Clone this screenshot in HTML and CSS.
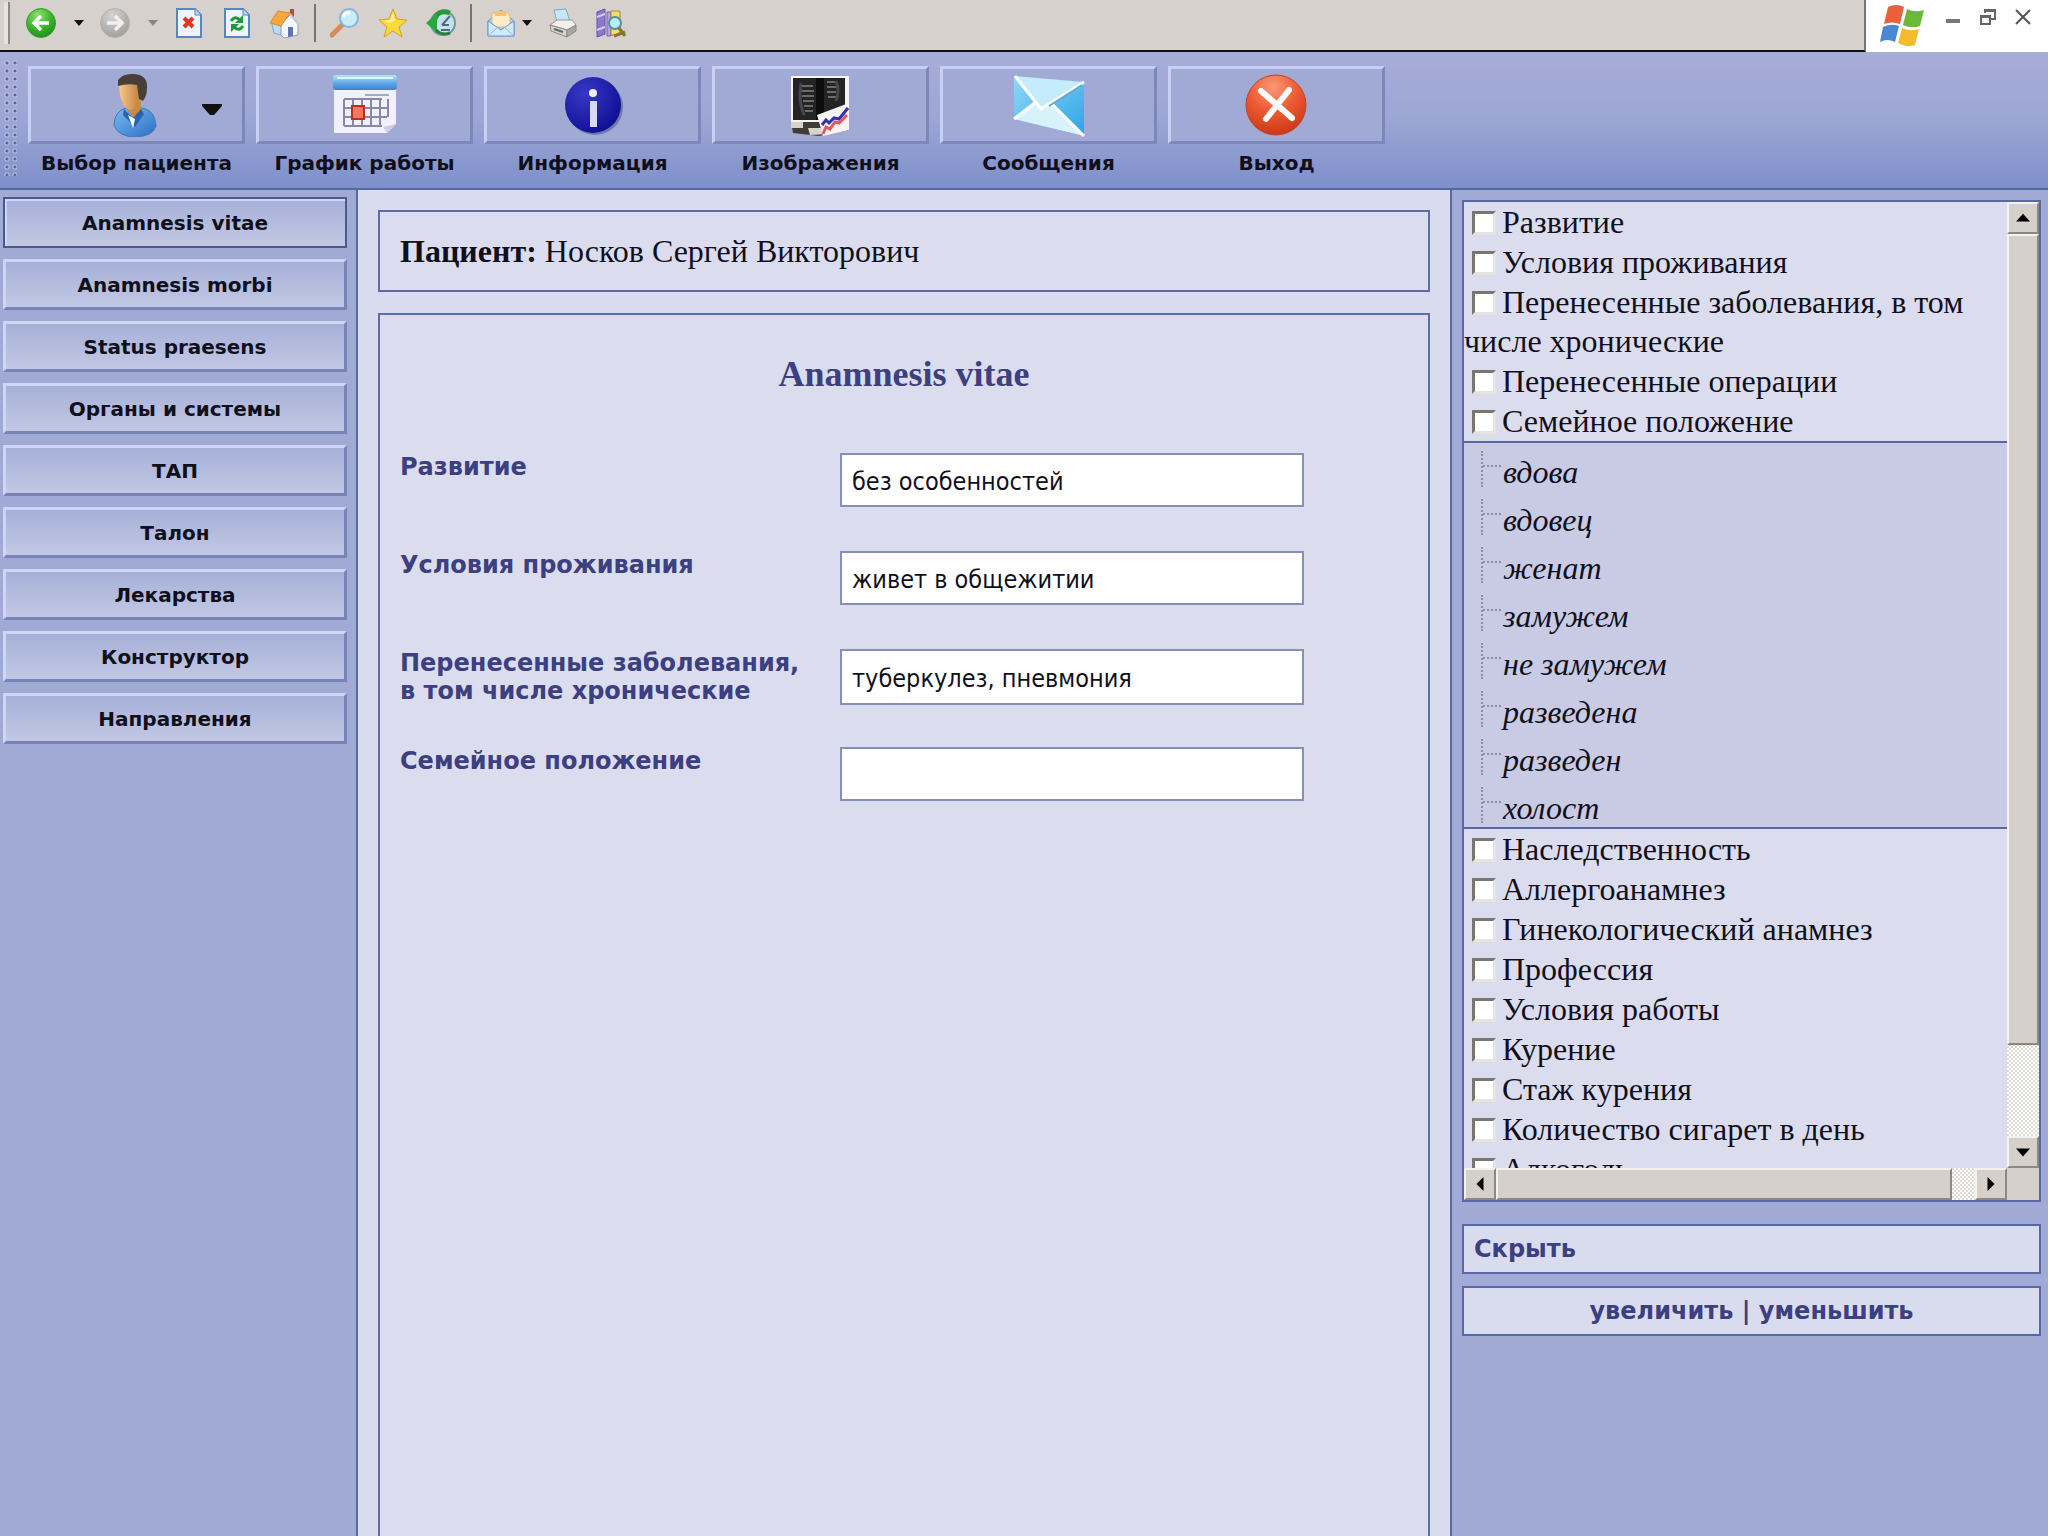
FILE: index.html
```html
<!DOCTYPE html>
<html lang="ru">
<head>
    <meta charset="UTF-8">
    <meta name="viewport" content="width=device-width, initial-scale=1.0">
    <title>Anamnesis vitae</title>
    <link rel="stylesheet" href="styles.css">
</head>
<body>
    <div class="browser-bar">
        <div class="browser-tools">
            <span class="bar-handle"></span>
            <button class="tool" aria-label="Назад">
                <svg viewBox="0 0 30 30"><defs><radialGradient id="gBack" cx=".4" cy=".25" r=".8"><stop offset="0" stop-color="#8fe070"/><stop offset=".55" stop-color="#3cb62c"/><stop offset="1" stop-color="#1c8a18"/></radialGradient></defs><circle cx="15" cy="15" r="14.500" fill="url(#gBack)" stroke="#3a9a30"/><path d="M15 8l-7 7 7 7M9 15h14" fill="none" stroke="#fff" stroke-width="3.500"/></svg>
            </button>
            <button class="tool-arrow" aria-label="История назад"><svg viewBox="0 0 10 6"><path d="M0 0h10l-5 6z" fill="#111"/></svg></button>
            <button class="tool" aria-label="Вперед">
                <svg viewBox="0 0 30 30"><defs><radialGradient id="gFwd" cx=".4" cy=".25" r=".8"><stop offset="0" stop-color="#d6d4d2"/><stop offset="1" stop-color="#9e9c9a"/></radialGradient></defs><circle cx="15" cy="15" r="14.500" fill="url(#gFwd)" stroke="#b4b0ae"/><path d="M15 8l7 7-7 7M21 15H7" fill="none" stroke="#f2f0ee" stroke-width="3.500"/></svg>
            </button>
            <button class="tool-arrow" aria-label="История вперед"><svg viewBox="0 0 10 6"><path d="M0 0h10l-5 6z" fill="#8c8984"/></svg></button>
            <button class="tool" aria-label="Остановить">
                <svg viewBox="0 0 30 30"><path d="M3 1h18l6 6v22H3z" fill="#eef5fd" stroke="#5a86be" stroke-width="2"/><path d="M21 1v6h6" fill="#b8d2f0" stroke="#5a86be"/><path d="M10 10l9 9M19 10l-9 9" stroke="#e03820" stroke-width="4"/></svg>
            </button>
            <button class="tool" aria-label="Обновить">
                <svg viewBox="0 0 30 30"><path d="M3 1h18l6 6v22H3z" fill="#eef5fd" stroke="#5a86be" stroke-width="2"/><path d="M21 1v6h6" fill="#b8d2f0" stroke="#5a86be"/><path d="M9 13q4-6 9-1M21 18q-4 6-9 1" fill="none" stroke="#1f9a34" stroke-width="3"/><path d="M21 7v8h-8zM9 24v-8h8z" fill="#1f9a34"/></svg>
            </button>
            <button class="tool" aria-label="Домой">
                <svg viewBox="0 0 30 30"><path d="M20 1h4v8h-4z" fill="#b0503c"/><path d="M2 16l8-10 8 10v13L4 25z" fill="#bcdcf4" stroke="#7ea8d0"/><path d="M11 16l9-9 8 9v11l-14 3-3-3z" fill="#f4f7ff" stroke="#8c9cc4"/><path d="M0 15L8 3l12 2-9 13z" fill="#f6a83c" stroke="#d88a28"/><path d="M20 6l9 11" stroke="#c0c8dc" stroke-width="2"/><path d="M18 19h5v9l-5 1z" fill="#6272b4"/></svg>
            </button>
            <span class="bar-sep"></span>
            <button class="tool" aria-label="Поиск">
                <svg viewBox="0 0 30 30"><path d="M12 17L2 27" stroke="#d88a58" stroke-width="5" stroke-linecap="round"/><circle cx="19" cy="10" r="9" fill="#c8ecfc" stroke="#88b4dc" stroke-width="2"/><path d="M13 9q2-5 7-4" fill="none" stroke="#fff" stroke-width="3"/></svg>
            </button>
            <button class="tool" aria-label="Избранное">
                <svg viewBox="0 0 30 30"><path d="M15 1l4 10 10 1-8 7 3 10-9-6-9 6 3-10-8-7 10-1z" fill="#fbd93c" stroke="#d8a018"/><path d="M15 5l2 8-6 2-5-2 6-1z" fill="#fff19a"/></svg>
            </button>
            <button class="tool" aria-label="Журнал">
                <svg viewBox="0 0 30 30"><circle cx="17" cy="15" r="12" fill="#c4e0ec" stroke="#6c9c94" stroke-width="2"/><path d="M16 17l8-9M16 17h7M15 22h9" stroke="#4c6c80" stroke-width="2"/><path d="M24 5Q12 1 9 11" fill="none" stroke="#28983c" stroke-width="5"/><path d="M0 15L11 5v20z" fill="#28a83c"/><path d="M10 22q6 6 14 3" fill="none" stroke="#28803c" stroke-width="3"/></svg>
            </button>
            <span class="bar-sep"></span>
            <button class="tool" aria-label="Почта">
                <svg viewBox="0 0 30 30"><path d="M2 13L15 2l13 11v15H2z" fill="#a8ccf4" stroke="#6898d4"/><path d="M6 5h16l2 3v11H6z" fill="#fcecc8" stroke="#e0b878"/><path d="M9 3h11v5H9z" fill="#f6c070"/><path d="M2 13l13 9 13-9v15H2z" fill="#d4e9fd" stroke="#6898d4"/><path d="M2 28l10-9M28 28l-10-9" stroke="#8cb4e4"/></svg>
            </button>
            <button class="tool-arrow tool-arrow-near" aria-label="Почта, меню"><svg viewBox="0 0 10 6"><path d="M0 0h10l-5 6z" fill="#111"/></svg></button>
            <button class="tool" aria-label="Печать">
                <svg viewBox="0 0 30 30"><path d="M6 2l12-1 4 13H9z" fill="#c4e8fa" stroke="#78acd0"/><path d="M2 17l7-5h15l4 5-9 5z" fill="#f2f0ec" stroke="#9a9894"/><path d="M2 17l17 5v7L3 23z" fill="#d4d2ce" stroke="#8c8a88"/><path d="M19 22l9-5v6l-9 6z" fill="#a8a6a2" stroke="#8c8a88"/><path d="M6 21l9 3" stroke="#666" stroke-width="2"/></svg>
            </button>
            <button class="tool" aria-label="Справочные материалы">
                <svg viewBox="0 0 30 30"><path d="M1 4l8-3v25l-8 3z" fill="#8c78cc" stroke="#6450a8"/><path d="M1 9l8-3M1 22l8-3" stroke="#d4ccf4" stroke-width="2"/><path d="M11 4h4v24h-4z" fill="#b4a4e0" stroke="#7460b0"/><path d="M15 3h9v24h-9z" fill="#f2dc78" stroke="#a88c2c"/><circle cx="19" cy="15" r="6" fill="#b4f0f4" stroke="#5c8c9c" stroke-width="2"/><path d="M23 20l6 8M18 28l11-4" stroke="#8c742c" stroke-width="3"/></svg>
            </button>
        </div>
        <div class="window-tools">
            <svg class="win-logo" viewBox="0 0 48 44"><path d="M9 3q8-4 16 0l-4 17q-8-3-16 0z" fill="#e8603c"/><path d="M28 5q8 4 17 1l-4 16q-9 3-17-1z" fill="#6cb838"/><path d="M4 23q8-4 16-1l-4 16q-8-4-15 0z" fill="#4888d4"/><path d="M23 24q9 4 17 1l-4 16q-9 3-17-2z" fill="#f4bc2c"/></svg>
            <button class="win-button" aria-label="Свернуть"><svg viewBox="0 0 18 18"><path d="M2 13h14" stroke="#777" stroke-width="4"/></svg></button>
            <button class="win-button" aria-label="Восстановить"><svg viewBox="0 0 18 18"><path d="M6 5V2h10v9h-4M6 3h10M2 8h9v8H2zM2 9h9" fill="none" stroke="#666" stroke-width="2"/></svg></button>
            <button class="win-button" aria-label="Закрыть"><svg viewBox="0 0 18 18"><path d="M2 2l14 14M16 2L2 16" stroke="#555" stroke-width="2"/></svg></button>
        </div>
    </div>

    <nav class="main-bar">
        <span class="main-grip"></span>
        <div class="main-item">
            <button class="main-button" id="patient" aria-labelledby="patient-label">
                <svg class="main-icon" viewBox="0 0 64 64"><defs><linearGradient id="gShirt" x2="1" y2="1"><stop offset="0" stop-color="#78b8f4"/><stop offset="1" stop-color="#2c70c4"/></linearGradient><linearGradient id="gFace" x2="1"><stop offset="0" stop-color="#f8c888"/><stop offset="1" stop-color="#c07c3c"/></linearGradient></defs><path d="M9 53q0-15 12-18h16q13 2 14 18-3 10-20 11-17 0-22-11z" fill="url(#gShirt)" stroke="#3c78bc"/><path d="M22 28h14v9l-7 8-7-8z" fill="#c88848"/><path d="M19 36l9 9 8-9 3 5-9 13-12-12z" fill="#2c64ac"/><path d="M23 42l7 4-2 9z" fill="#fff"/><path d="M14 12q4-7 18-6 6 12 2 22-3 9-9 9-10-3-11-25z" fill="url(#gFace)"/><path d="M13 7q5-7 16-6 14 1 13 14 0 8-4 13l-4-2-2-14q-9-2-19 1z" fill="#484038"/></svg>
                <svg class="main-caret" viewBox="0 0 20 12"><path d="M0 0h20v2l-8 9h-4L0 2z" fill="#111"/></svg>
            </button>
            <label class="main-label" for="patient" id="patient-label">Выбор пациента</label>
        </div>
        <div class="main-item">
            <button class="main-button" id="schedule" aria-labelledby="schedule-label">
                <svg class="main-icon" viewBox="0 0 64 64"><defs><linearGradient id="gCal" x2="0" y2="1"><stop offset="0" stop-color="#b4e4fc"/><stop offset=".5" stop-color="#64acec"/><stop offset="1" stop-color="#3c80cc"/></linearGradient></defs><path d="M1 8h62v43l-9 9H1z" fill="#f2f0fc"/><path d="M63 51l-9 9-4-6z" fill="#cccce8"/><rect y="2" width="64" height="15" rx="3" fill="url(#gCal)"/><path d="M4 5h56" stroke="#e0f6ff" stroke-width="2"/><path d="M32 22h24" stroke="#a8a8b8" stroke-width="2"/><path d="M11 26h38M11 35h43M11 44h43M11 53h38M11 26v27M20 26v27M29 26v27M38 26v27M47 26v27M55 26v18" stroke="#8888a4" stroke-width="2" fill="none"/><rect x="19" y="33" width="12" height="13" fill="#f47860" stroke="#b83020" stroke-width="2"/></svg>
            </button>
            <label class="main-label" for="schedule" id="schedule-label">График работы</label>
        </div>
        <div class="main-item">
            <button class="main-button" id="info" aria-labelledby="info-label">
                <svg class="main-icon" viewBox="0 0 64 64"><defs><radialGradient id="gInfo" cx=".35" cy=".3" r=".8"><stop offset="0" stop-color="#3838c8"/><stop offset="1" stop-color="#0c0c90"/></radialGradient></defs><circle cx="34" cy="34" r="28" fill="#7078a8"/><circle cx="32" cy="32" r="28" fill="url(#gInfo)"/><circle cx="32" cy="20" r="4" fill="#f0f0ff"/><path d="M29 28h7v26h-7z" fill="#d8d8fc"/></svg>
            </button>
            <label class="main-label" for="info" id="info-label">Информация</label>
        </div>
        <div class="main-item">
            <button class="main-button" id="images" aria-labelledby="images-label">
                <svg class="main-icon" viewBox="0 0 64 64"><path d="M2 48h58v9l-30 6-26-3z" fill="#403c3a"/><path d="M2 49h12v6H2zM19 55h20v6l-18 1z" fill="#d8d4cc"/><path d="M2 3h58v46H2z" fill="#f4f4f4"/><path d="M4 5h52v42H4z" fill="#242424"/><path d="M27 5h8v42h-8z" fill="#0c0c0c"/><path d="M13 13h11M12 18h13M13 23h12M14 28h11M15 33h9M16 38h8M38 9h9M38 14h10M38 19h9M39 24h8" stroke="#6c6c6c" stroke-width="2"/><path d="M12 10q-3 18 3 32M47 8q4 10 0 20" stroke="#484848" stroke-width="3" fill="none"/><path d="M28 42l32-12v27l-26 6z" fill="#f8f4f4"/><path d="M33 52l4-5 3 3 5-5 5 1 9-11" fill="none" stroke="#3430b0" stroke-width="3"/><path d="M34 61l3-7 4 2 5-7 4 1 8-8" fill="none" stroke="#e05860" stroke-width="3"/></svg>
            </button>
            <label class="main-label" for="images" id="images-label">Изображения</label>
        </div>
        <div class="main-item">
            <button class="main-button" id="messages" aria-labelledby="messages-label">
                <svg class="main-icon main-icon-wide" viewBox="0 0 72 64"><defs><linearGradient id="gMail" x2="1" y2="1"><stop offset="0" stop-color="#90d8f8"/><stop offset="1" stop-color="#2ca4e4"/></linearGradient></defs><path d="M1 3l70 6v54L1 46z" fill="url(#gMail)"/><path d="M1 3l70 6-43 28z" fill="#c4ecfc"/><path d="M1 46l23-17 5 7 9-5 33 32z" fill="#d8f2fc"/><path d="M2 3l26 33L71 9M1 46l22-17M38 30l33 33" fill="none" stroke="#fff" stroke-width="3"/><path d="M36 33l33-21" stroke="#64a8cc" stroke-width="2"/></svg>
            </button>
            <label class="main-label" for="messages" id="messages-label">Сообщения</label>
        </div>
        <div class="main-item">
            <button class="main-button" id="exit" aria-labelledby="exit-label">
                <svg class="main-icon" viewBox="0 0 64 64"><defs><radialGradient id="gExit" cx=".45" cy=".2" r=".8"><stop offset="0" stop-color="#fa9a78"/><stop offset=".5" stop-color="#ee5c34"/><stop offset="1" stop-color="#cc3818"/></radialGradient></defs><circle cx="31" cy="32" r="30" fill="url(#gExit)" stroke="#c04428"/><path d="M16 18l31 27M44 17L21 46" stroke="#fff" stroke-width="6" stroke-linecap="round"/></svg>
            </button>
            <label class="main-label" for="exit" id="exit-label">Выход</label>
        </div>
    </nav>

    <div class="workspace">
        <aside class="sidebar">
            <button class="side-button side-button-active">Anamnesis vitae</button>
            <button class="side-button">Anamnesis morbi</button>
            <button class="side-button">Status praesens</button>
            <button class="side-button">Органы и системы</button>
            <button class="side-button">ТАП</button>
            <button class="side-button">Талон</button>
            <button class="side-button">Лекарства</button>
            <button class="side-button">Конструктор</button>
            <button class="side-button">Направления</button>
        </aside>

        <main class="content">
            <div class="patient-box"><b>Пациент:</b> Носков Сергей Викторович</div>
            <form class="form-box">
                <h1 class="form-title">Anamnesis vitae</h1>
                <div class="form-row">
                    <label for="growth">Развитие</label>
                    <input type="text" id="growth" value="без особенностей">
                </div>
                <div class="form-row">
                    <label for="living">Условия проживания</label>
                    <input type="text" id="living" value="живет в общежитии">
                </div>
                <div class="form-row">
                    <label for="diseases">Перенесенные заболевания,<br>в том числе хронические</label>
                    <input type="text" id="diseases" value="туберкулез, пневмония">
                </div>
                <div class="form-row">
                    <label for="family">Семейное положение</label>
                    <input type="text" id="family">
                </div>
            </form>
        </main>

        <aside class="options">
            <div class="scroll-panel">
                <div class="option-list">
                    <label class="option"><input type="checkbox">Развитие</label>
                    <label class="option"><input type="checkbox">Условия проживания</label>
                    <label class="option"><input type="checkbox">Перенесенные заболевания, в том числе хронические</label>
                    <label class="option"><input type="checkbox">Перенесенные операции</label>
                    <label class="option"><input type="checkbox">Семейное положение</label>
                    <ul class="sub-list">
                        <li>вдова</li>
                        <li>вдовец</li>
                        <li>женат</li>
                        <li>замужем</li>
                        <li>не замужем</li>
                        <li>разведена</li>
                        <li>разведен</li>
                        <li>холост</li>
                    </ul>
                    <label class="option"><input type="checkbox">Наследственность</label>
                    <label class="option"><input type="checkbox">Аллергоанамнез</label>
                    <label class="option"><input type="checkbox">Гинекологический анамнез</label>
                    <label class="option"><input type="checkbox">Профессия</label>
                    <label class="option"><input type="checkbox">Условия работы</label>
                    <label class="option"><input type="checkbox">Курение</label>
                    <label class="option"><input type="checkbox">Стаж курения</label>
                    <label class="option"><input type="checkbox">Количество сигарет в день</label>
                    <label class="option"><input type="checkbox">Алкоголь</label>
                </div>
                <div class="scroll scroll-y">
                    <button class="scroll-button" aria-label="Вверх"><svg viewBox="0 0 16 16"><path d="M8 3l8 9H0z"/></svg></button>
                    <span class="scroll-thumb"></span>
                    <button class="scroll-button" aria-label="Вниз"><svg viewBox="0 0 16 16"><path d="M0 4h16l-8 9z"/></svg></button>
                </div>
                <div class="scroll scroll-x">
                    <button class="scroll-button" aria-label="Влево"><svg viewBox="0 0 16 16"><path d="M12 0v16L4 8z"/></svg></button>
                    <span class="scroll-thumb"></span>
                    <button class="scroll-button" aria-label="Вправо"><svg viewBox="0 0 16 16"><path d="M4 0v16l8-8z"/></svg></button>
                </div>
                <span class="scroll-corner"></span>
            </div>
            <div class="link-box"><a href="#">Скрыть</a></div>
            <div class="link-box link-box-center"><a href="#">увеличить</a> | <a href="#">уменьшить</a></div>
        </aside>
    </div>
</body>
</html>
```
FILE: styles.css
```css
* {
    box-sizing: border-box;
}

body {
    margin: 0;
    height: 100vh;
    display: flex;
    flex-direction: column;
    overflow: hidden;
    background: #a0aad4;
    font-family: "Liberation Serif", "Times New Roman", serif;
    color: #10101c;
}

button {
    margin: 0;
    padding: 0;
    border: 0;
    background: none;
    color: inherit;
}

svg {
    display: block;
}

/* browser toolbar */
.browser-bar {
    display: flex;
    height: 52px;
    flex: none;
    background: #fff;
}

.browser-tools {
    flex: 1;
    display: flex;
    align-items: center;
    gap: 18px;
    padding: 0 4px 4px;
    background: #d6d1cc;
    border-right: 2px solid #77736e;
    border-bottom: 2px solid #101018;
}

.bar-handle {
    width: 6px;
    height: 42px;
    margin-right: -2px;
    background: #e6e2de;
    border-right: 2px solid #8c8984;
}

.tool {
    width: 30px;
    height: 30px;
}

.tool-arrow {
    width: 10px;
    margin-right: -2px;
}

.tool-arrow-near {
    margin-left: -12px;
}

.bar-sep {
    width: 2px;
    height: 38px;
    margin: 0 -4px;
    background: #77736e;
}

.window-tools {
    display: flex;
    gap: 17px;
    width: 182px;
    padding: 4px 14px 4px 13px;
}

.win-logo {
    width: 48px;
    height: 44px;
}

.win-button {
    width: 18px;
    height: 18px;
    margin-top: 4px;
}

/* main toolbar */
.main-bar {
    display: flex;
    flex: none;
    gap: 11px;
    padding: 14px 4px 12px;
    background: linear-gradient(#a8acd8, #9ca6d4 50%, #7e8fcb);
    border-bottom: 2px solid #5868a4;
}

.main-grip {
    width: 13px;
    margin: -6px 0 0;
    background: radial-gradient(circle at 3px 3px, #5c6490 1px, #c0c6ea 2px, transparent 3px) 0 0 / 8px 8px;
}

.main-item {
    width: 217px;
}

.main-button {
    display: flex;
    align-items: center;
    justify-content: center;
    position: relative;
    width: 100%;
    height: 78px;
    background: #a0aad4;
    border: 3px solid;
    border-color: #c6d0f4 #7c88bc #7c88bc #c6d0f4;
}

.main-icon {
    width: 64px;
    height: 64px;
}

.main-icon-wide {
    width: 72px;
}

.main-caret {
    position: absolute;
    right: 20px;
    top: 35px;
    width: 20px;
    height: 12px;
}

.main-label {
    display: block;
    padding-top: 6px;
    font: bold 20px/26px "DejaVu Sans", Verdana, sans-serif;
    text-align: center;
    white-space: nowrap;
}

.workspace {
    flex: 1;
    min-height: 0;
    display: grid;
    grid-template-columns: 358px 1fr 598px;
}

/* left menu */
.sidebar {
    display: flex;
    flex-direction: column;
    gap: 11px;
    padding: 7px 9px 0 3px;
    border-right: 2px solid #5868a4;
}

.side-button {
    flex: none;
    height: 51px;
    background: linear-gradient(#a6b0d8, #c2c8e4);
    border: 3px solid;
    border-color: #ccd6f6 #7884b8 #7884b8 #ccd6f6;
    font: bold 20px/24px "DejaVu Sans", Verdana, sans-serif;
}

.side-button-active {
    border: 2px solid #4c5890;
    box-shadow: inset 2px 2px #ccd6f6;
}

/* patient form */
.content {
    display: flex;
    flex-direction: column;
    gap: 21px;
    padding: 20px 20px 0;
    background: #d9dcee;
}

.patient-box,
.form-box {
    background: #dbdcee;
    border: 2px solid #5c6ca4;
}

.patient-box {
    padding: 20px;
    font-size: 32px;
    line-height: 38px;
}

.form-box {
    flex: 1;
    padding: 40px 20px 0;
    border-bottom: 0;
}

.form-title {
    margin: 0 0 60px;
    font-size: 36px;
    line-height: 38px;
    text-align: center;
    color: #3c4080;
}

.form-row {
    display: grid;
    grid-template-columns: 440px 464px;
    height: 54px;
    margin-bottom: 44px;
}

.form-row label {
    font: bold 24px/28px "DejaVu Sans", Tahoma, sans-serif;
    color: #3c4080;
}

.form-row input {
    padding: 4px 10px 0;
    background: #fff;
    border: 2px solid #8490b8;
    font: 25px/28px "DejaVu Sans Condensed", Tahoma, sans-serif;
    color: #10101c;
}

/* right panel */
.options {
    padding: 10px 7px 0 10px;
    border-left: 2px solid #5868a4;
}

.scroll-panel {
    display: grid;
    grid-template-columns: 1fr 32px;
    grid-template-rows: 1fr 32px;
    height: calc(100vh - 534px);
    margin-bottom: 22px;
    background: #dbdcee;
    border: 2px solid #5868a4;
}

.option-list {
    overflow: hidden;
    min-height: 0;
}

.option {
    display: block;
    padding-top: 1px;
    font-size: 32px;
    line-height: 39px;
}

.option input {
    appearance: none;
    width: 24px;
    height: 24px;
    margin: 0 6px 0 8px;
    vertical-align: -2px;
    background: #fff;
    border: 3px solid;
    border-color: #78766e #e6e4de #e6e4de #78766e;
}

.sub-list {
    margin: 0;
    padding: 0;
    list-style: none;
    background: #c9cae4;
    border-top: 2px solid #5868a4;
    border-bottom: 2px solid #5868a4;
    font-size: 32px;
    font-style: italic;
}

.sub-list li {
    display: flex;
    height: 48px;
    padding: 8px 0 0 17px;
    line-height: 42px;
}

/* dotted tree branch */
.sub-list li::before {
    content: "";
    width: 20px;
    height: 36px;
    border-left: 2px dotted #8c8ea4;
    background: repeating-linear-gradient(90deg, #8c8ea4 0 2px, transparent 2px 4px) 0 14px / 100% 2px no-repeat;
}

.scroll {
    display: flex;
    background: repeating-conic-gradient(#fff 0 25%, #dcd8d2 0 50%) 0 0 / 4px 4px;
}

.scroll-y {
    flex-direction: column;
}

.scroll-button,
.scroll-thumb,
.scroll-corner {
    background: #d5d0ca;
    border: 2px solid;
    border-color: #f4f2ee #8c8984 #8c8984 #f4f2ee;
}

.scroll-button {
    display: flex;
    align-items: center;
    justify-content: center;
    flex: none;
    width: 32px;
    height: 32px;
}

.scroll-button svg {
    width: 14px;
    height: 14px;
}

.scroll-thumb {
    flex: 0 0 84%;
}

.scroll-y .scroll-button:last-child {
    margin-top: auto;
}

.scroll-x .scroll-button:last-child {
    margin-left: auto;
}

.scroll-corner {
    border-color: #d5d0ca;
}

.link-box {
    margin-bottom: 12px;
    padding: 9px 10px;
    background: #d9dcee;
    border: 2px solid #5868a4;
    font: bold 24px/28px "DejaVu Sans", Tahoma, sans-serif;
    color: #3c4080;
}

.link-box-center {
    text-align: center;
}

.link-box a {
    color: inherit;
    text-decoration: none;
}
```
